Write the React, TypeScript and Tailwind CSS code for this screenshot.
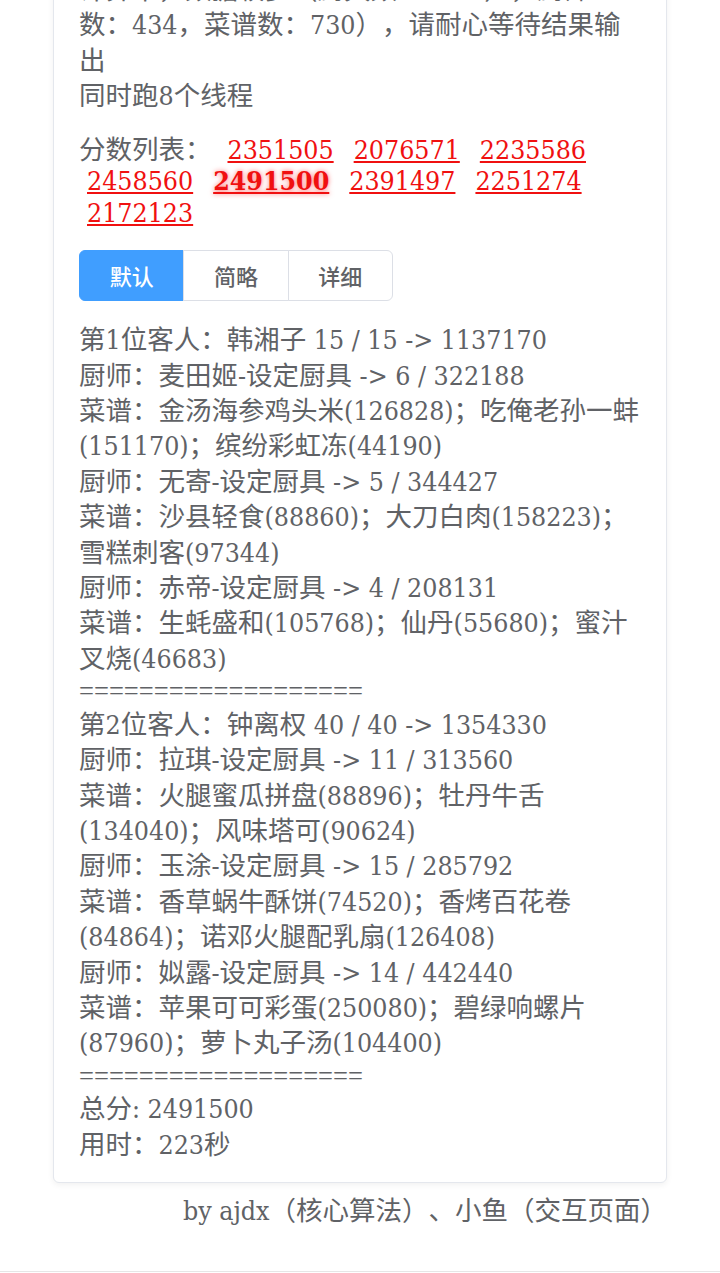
import React, { useState } from 'react';

const scores = ['2351505', '2076571', '2235586', '2458560', '2491500', '2391497', '2251274', '2172123'];
const best = '2491500';

const tabs = ['默认', '简略', '详细'];

const divider = '===================';

export default function App() {
  const [tab, setTab] = useState(0);

  return (
    <div className="flow-root min-h-[1273px] bg-white text-[#606266] [text-spacing-trim:space-all] font-['DejaVu_Serif_Condensed','Liberation_Serif','Noto_Sans_CJK_SC',serif]">
      {/* Result card */}
      <div className="mx-[53px] mt-[-49px] rounded-md border border-[#e4e7ed] bg-white px-[25px] pt-5 pb-[20px] shadow-[0_2px_6px_rgba(0,0,0,0.06)]">
        <p className="text-[26.5px] leading-[35.4px] whitespace-nowrap">
          计算中，数据较多（厨具数：1253），厨师
          <br />
          数：434，菜谱数：730），请耐心等待结果输
          <br />
          出
          <br />
          同时跑8个线程
        </p>

        <div className="mt-5 flex flex-wrap text-[26.5px] leading-[31.5px]">
          <span className="mr-[8px]">分数列表：</span>
          {scores.map((s) => (
            <a
              key={s}
              href="#"
              className={
                s === best
                  ? 'ml-2 mr-3 font-bold text-[#f01010] underline decoration-[#f01010] [text-shadow:0_0_5px_rgba(255,0,0,0.55)]'
                  : 'ml-2 mr-3 text-[#f01010] underline decoration-[#f01010]'
              }
            >
              {s}
            </a>
          ))}
        </div>

        <div className="mt-[22px] flex w-[314px] font-['Noto_Sans_CJK_SC',sans-serif] text-[22px] font-medium">
          {tabs.map((t, i) => (
            <button
              key={t}
              type="button"
              onClick={() => setTab(i)}
              className={
                (i === 0 ? 'rounded-l-md ' : i === 2 ? 'rounded-r-md ' : '') +
                (tab === i
                  ? 'h-[51px] flex-1 border border-[#409eff] bg-[#409eff] text-white'
                  : 'h-[51px] flex-1 border border-[#dcdfe6] bg-white text-[#606266]') +
                (i > 0 ? ' ml-[-1px]' : '')
              }
            >
              {t}
            </button>
          ))}
        </div>

        <div className="mt-[21px] text-[26.5px] leading-[35.4px] whitespace-nowrap">
          <div>第1位客人：韩湘子 15 / 15 -&gt; 1137170</div>
          <div>厨师：麦田姬-设定厨具 -&gt; 6 / 322188</div>
          <div>
            菜谱：金汤海参鸡头米(126828)；吃俺老孙一蚌
            <br />
            (151170)；缤纷彩虹冻(44190)
          </div>
          <div>厨师：无寄-设定厨具 -&gt; 5 / 344427</div>
          <div>
            菜谱：沙县轻食(88860)；大刀白肉(158223)；
            <br />
            雪糕刺客(97344)
          </div>
          <div>厨师：赤帝-设定厨具 -&gt; 4 / 208131</div>
          <div>
            菜谱：生蚝盛和(105768)；仙丹(55680)；蜜汁
            <br />
            叉烧(46683)
          </div>
          <div className="font-['Liberation_Serif',serif] leading-[30.6px]">{divider}</div>

          <div>第2位客人：钟离权 40 / 40 -&gt; 1354330</div>
          <div>厨师：拉琪-设定厨具 -&gt; 11 / 313560</div>
          <div>
            菜谱：火腿蜜瓜拼盘(88896)；牡丹牛舌
            <br />
            (134040)；风味塔可(90624)
          </div>
          <div>厨师：玉涂-设定厨具 -&gt; 15 / 285792</div>
          <div>
            菜谱：香草蜗牛酥饼(74520)；香烤百花卷
            <br />
            (84864)；诺邓火腿配乳扇(126408)
          </div>
          <div>厨师：姒露-设定厨具 -&gt; 14 / 442440</div>
          <div>
            菜谱：苹果可可彩蛋(250080)；碧绿响螺片
            <br />
            (87960)；萝卜丸子汤(104400)
          </div>
          <div className="font-['Liberation_Serif',serif] leading-[30.6px]">{divider}</div>

          <div>总分: 2491500</div>
          <div>用时：223秒</div>
        </div>
      </div>

      {/* Credits */}
      <div className="mx-[53px] mt-[10px] text-right text-[26.5px] leading-[35.4px]">
        by ajdx（核心算法）、小鱼（交互页面）
      </div>

      <div className="mt-[42px] border-t border-[#e6e6e6]" />
    </div>
  );
}
